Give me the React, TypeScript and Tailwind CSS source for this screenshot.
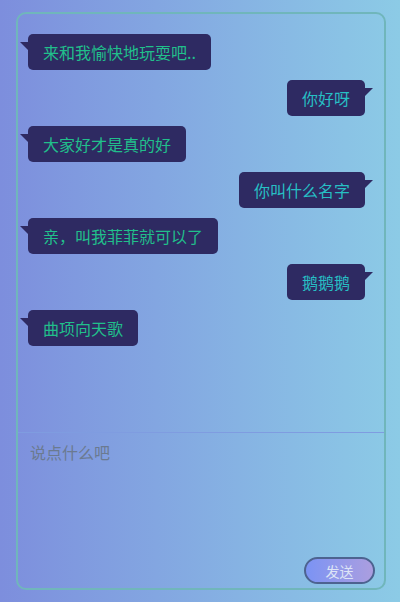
import { useState } from 'react';

type Msg = { text: string; mine: boolean };

const messages: Msg[] = [
  { text: '来和我愉快地玩耍吧..', mine: false },
  { text: '你好呀', mine: true },
  { text: '大家好才是真的好', mine: false },
  { text: '你叫什么名字', mine: true },
  { text: '亲，叫我菲菲就可以了', mine: false },
  { text: '鹅鹅鹅', mine: true },
  { text: '曲项向天歌', mine: false },
];

function Bubble({ msg }: { msg: Msg }) {
  if (msg.mine) {
    return (
      <div className="flex justify-end pr-[19px]">
        <div className="relative h-[36px] px-[15px] rounded-[5px] bg-[#2e2a62] text-[#27bfc4] leading-[36px] text-[16px]">
          {msg.text}
          <span className="absolute top-[8px] right-[-8px] w-0 h-0 border-t-[8px] border-t-[#2e2a62] border-r-[8px] border-r-transparent" />
        </div>
      </div>
    );
  }
  return (
    <div className="flex justify-start pl-[10px]">
      <div className="relative h-[36px] px-[15px] rounded-[5px] bg-[#2e2a62] text-[#21bf8b] leading-[36px] text-[16px]">
        {msg.text}
        <span className="absolute top-[8px] left-[-8px] w-0 h-0 border-t-[8px] border-t-[#2e2a62] border-l-[8px] border-l-transparent" />
      </div>
    </div>
  );
}

export default function App() {
  const [text, setText] = useState('');

  return (
    <div
      className="w-[400px] h-[602px] pt-[12px] pl-[16px] bg-gradient-to-r from-[#7d8edd] to-[#8ccbe6]"
      style={{ fontFamily: '"Noto Sans CJK SC", "Noto Sans", sans-serif' }}
    >
      <div className="w-[370px] h-[578px] border-2 border-[#70b6bb] rounded-[10px] flex flex-col">
        <div className="h-[419px] pt-[20px] flex flex-col gap-[10px] border-b border-[#7f9ce0]">
          {messages.map((m, i) => (
            <Bubble key={i} msg={m} />
          ))}
        </div>
        <div className="flex-1 flex flex-col">
          <textarea
            autoFocus
            value={text}
            onChange={(e) => setText(e.target.value)}
            placeholder="说点什么吧"
            className="flex-1 resize-none bg-transparent outline-none px-[12px] pt-[7px] text-[16px] leading-[24px] text-white caret-white placeholder:text-[#6b7a90]"
          />
          <div className="flex justify-end pr-[9px] pb-[4px]">
            <button className="w-[71px] h-[27px] rounded-full border-2 border-[#4d6390] bg-gradient-to-r from-[#7b93f4] to-[#ab9edf] text-[14px] text-[#dde4f6] leading-none">
              发送
            </button>
          </div>
        </div>
      </div>
    </div>
  );
}
